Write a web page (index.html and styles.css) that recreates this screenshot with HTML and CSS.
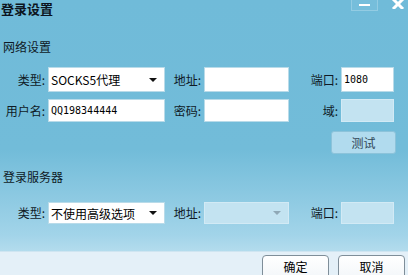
FILE: index.html
```html
<!DOCTYPE html>
<html lang="zh-CN">
<head>
  <meta charset="UTF-8">
  <title>登录设置</title>
  <link rel="stylesheet" href="styles.css">
</head>
<body>
  <div class="window">
    <div class="titlebar">
      <span class="title">登录设置</span>
      <div class="controls">
        <span class="btn-min">
          <svg width="25" height="10" viewBox="0 0 25 10"><rect x="7" y="4" width="11" height="2" fill="#fff"/></svg>
        </span>
        <span class="btn-close">
          <svg width="14" height="9" viewBox="0 0 14 9"><path d="M2 -1 L12 9 M12 -1 L2 9" stroke="#fff" stroke-width="3"/></svg>
        </span>
      </div>
    </div>

    <div class="group-title">网络设置</div>
    <div class="form-grid">
      <label class="lbl">类型:</label>
      <div class="field select">SOCKS5代理<span class="arrow"></span></div>
      <label class="lbl">地址:</label>
      <div class="field"></div>
      <label class="lbl">端口:</label>
      <div class="field mono">1080</div>

      <label class="lbl">用户名:</label>
      <div class="field mono">QQ198344444</div>
      <label class="lbl">密码:</label>
      <div class="field"></div>
      <label class="lbl">域:</label>
      <div class="field disabled"></div>
    </div>
    <div class="test-row">
      <button class="btn-test">测试</button>
    </div>

    <div class="group-title server">登录服务器</div>
    <div class="form-grid row3">
      <label class="lbl">类型:</label>
      <div class="field select">不使用高级选项<span class="arrow"></span></div>
      <label class="lbl">地址:</label>
      <div class="field select disabled"><span class="arrow grey"></span></div>
      <label class="lbl">端口:</label>
      <div class="field disabled"></div>
    </div>

    <div class="footer">
      <button class="btn">确定</button>
      <button class="btn">取消</button>
    </div>
  </div>
</body>
</html>
```

FILE: styles.css
```css
body {
  margin: 0;
  font-family: "Noto Sans CJK SC", "Noto Sans", sans-serif;
  font-size: 12px;
  color: #0f1a26;
}
.window {
  width: 408px;
  height: 275px;
  overflow: hidden;
  background: linear-gradient(#70bbd9 0px, #72bcd9 150px, #a2d4e9 235px, #b3dced 251px);
}
.titlebar {
  height: 16px;
  display: flex;
  justify-content: space-between;
}
.title {
  padding: 1px 0 0 1px;
  font-size: 13px;
  font-weight: bold;
  line-height: 15px;
  color: #0c1420;
}
.controls {
  display: flex;
  align-items: flex-start;
  gap: 13px;
  padding-right: 3px;
}
.btn-min {
  display: block;
  width: 27px;
  height: 11px;
  border: 1px solid #93cce3;
  border-top: none;
  box-sizing: border-box;
  background: #76bedb;
}
.btn-min svg,
.btn-close svg {
  display: block;
}
.group-title {
  margin-top: 24px;
  padding-left: 3px;
  line-height: 14px;
}
.group-title.server {
  margin-top: 16px;
}
.form-grid {
  display: grid;
  grid-template-columns: 48px 117px 39px 85px 52px 53px;
  grid-template-rows: 25px 23px;
  row-gap: 7px;
  margin-top: 13px;
}
.form-grid.row3 {
  grid-template-rows: 22px;
  margin-top: 18px;
}
.lbl {
  text-align: right;
  padding-right: 3px;
  align-self: center;
  line-height: 14px;
  white-space: nowrap;
}
.field {
  position: relative;
  background: #fff;
  border: 1px solid #b9dbe9;
  box-sizing: border-box;
  padding-left: 2px;
  display: flex;
  align-items: center;
  white-space: nowrap;
}
.field.mono {
  font-family: "DejaVu Sans Mono", "Liberation Mono", monospace;
  font-size: 10px;
  color: #000;
}
.field.select {
  color: #000;
}
.field.disabled {
  background: #c3e3f1;
  border-color: #d2eaf5;
}
.arrow {
  position: absolute;
  right: 7px;
  top: 50%;
  margin-top: -2px;
  border-left: 4px solid transparent;
  border-right: 4px solid transparent;
  border-top: 4px solid #111;
}
.arrow.grey {
  border-top-color: #8fa8b6;
}
.test-row {
  display: flex;
  justify-content: flex-end;
  padding-right: 12px;
  margin-top: 9px;
}
.btn-test {
  width: 65px;
  height: 23px;
  font-family: inherit;
  font-size: 12px;
  color: #2f4656;
  background: #b1dbee;
  border: 1px solid #8cc3da;
  border-radius: 3px;
  padding: 0;
}
.footer {
  margin-top: 27px;
  height: 24px;
  background: #e4f0f8;
  border-top: 1px solid #cfe5f1;
  display: flex;
  justify-content: flex-end;
  align-items: flex-start;
  gap: 9px;
  padding: 3px 3px 0 0;
}
.btn {
  width: 67px;
  height: 26px;
  font-family: inherit;
  font-size: 12px;
  color: #000;
  background: linear-gradient(#ffffff, #f2f6f9);
  border: 1px solid #7f8e99;
  border-radius: 4px;
  padding: 0 0 4px;
}
```
